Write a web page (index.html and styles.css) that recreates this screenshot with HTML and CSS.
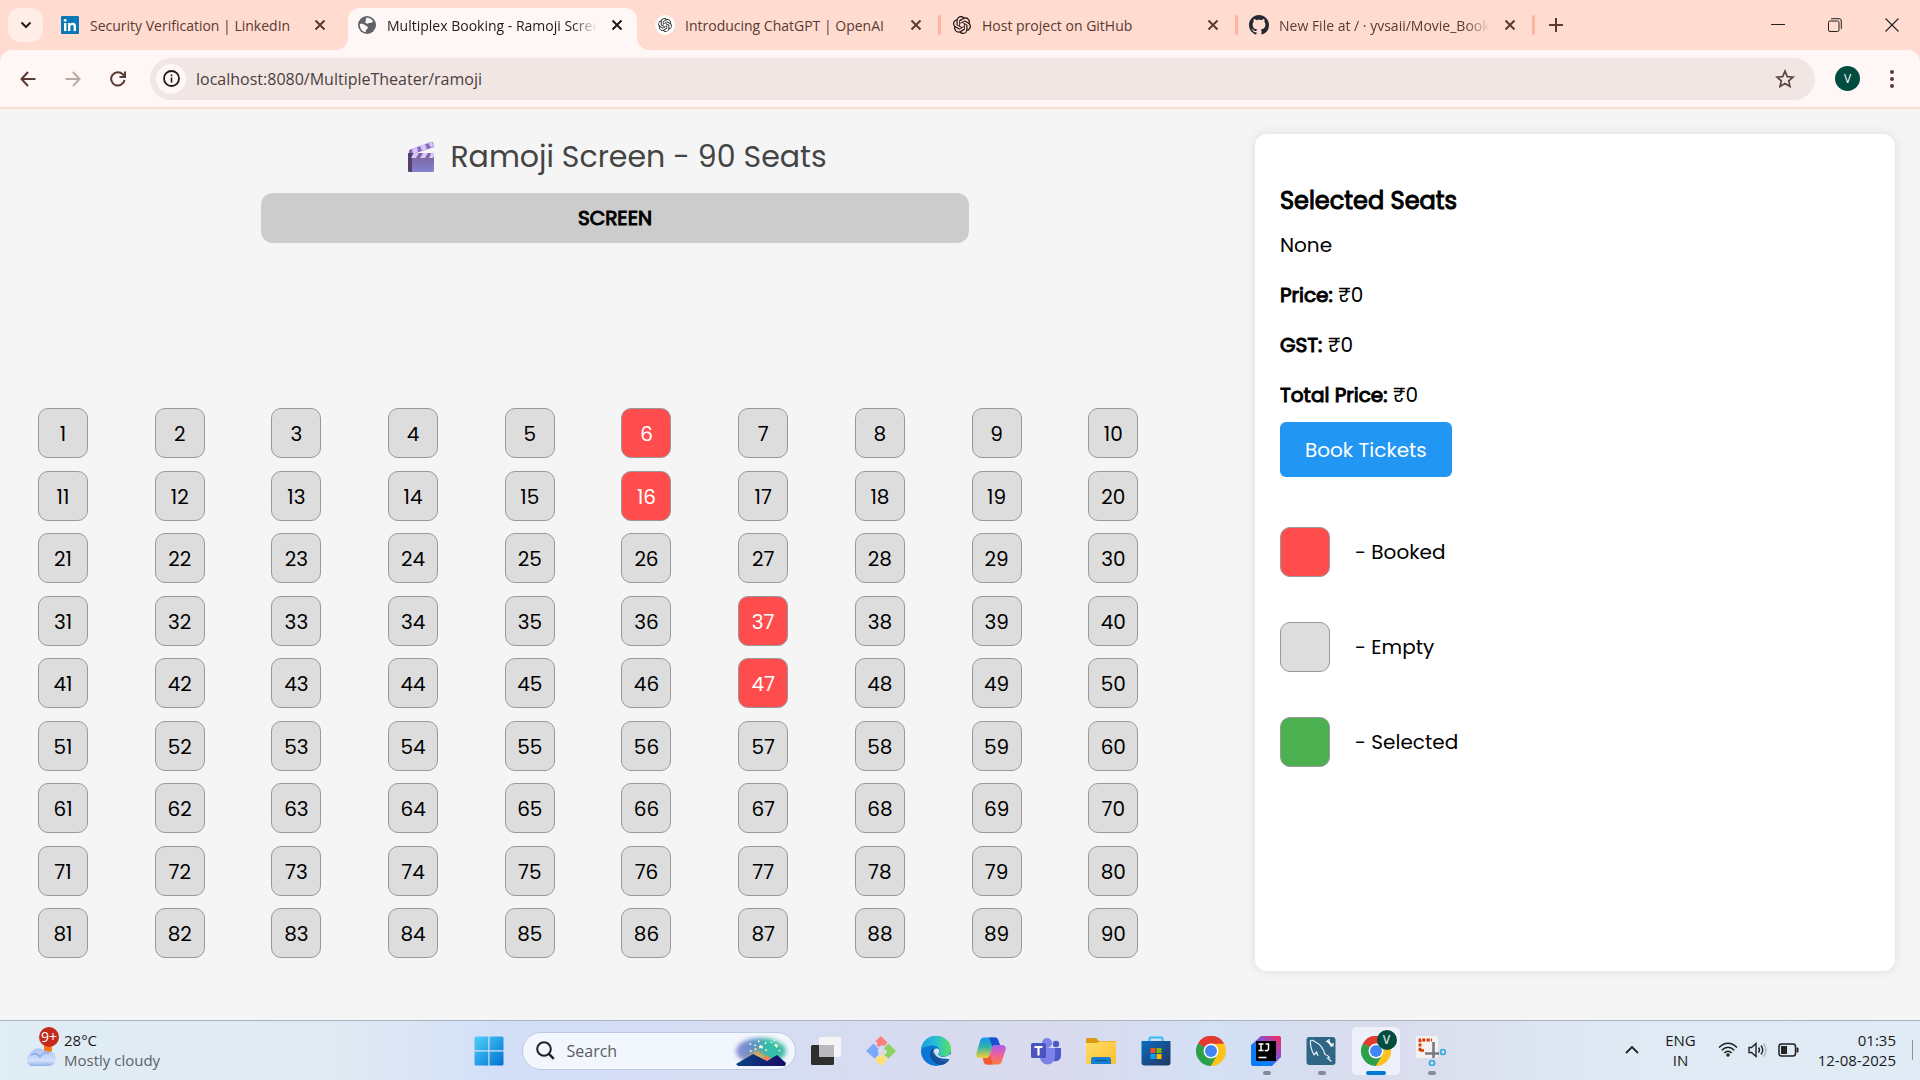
FILE: index.html
```html
<!DOCTYPE html>
<html lang="en">
<head>
<meta charset="utf-8">
<title>Multiplex Booking - Ramoji Screen</title>
<link rel="stylesheet" href="styles.css">
</head>
<body>
<svg class="defs" aria-hidden="true">
  <defs>
    <symbol id="x" viewBox="0 0 12 12"><path d="M1.5 1.5l9 9M10.500 1.500l-9 9" stroke="currentColor" stroke-width="2" fill="none"/></symbol>
    <symbol id="openai" viewBox="0 0 24 24"><path fill="currentColor" d="M22.282 9.821a5.985 5.985 0 0 0-.516-4.910 6.046 6.046 0 0 0-6.510-2.900A6.065 6.065 0 0 0 4.981 4.180a5.985 5.985 0 0 0-3.998 2.900 6.046 6.046 0 0 0 .743 7.097 5.980 5.980 0 0 0 .510 4.911 6.051 6.051 0 0 0 6.515 2.900A5.985 5.985 0 0 0 13.260 24a6.056 6.056 0 0 0 5.772-4.206 5.990 5.990 0 0 0 3.998-2.900 6.056 6.056 0 0 0-.748-7.073zM13.260 22.430a4.476 4.476 0 0 1-2.876-1.040l.142-.081 4.778-2.758a.795.795 0 0 0 .393-.681v-6.737l2.020 1.169a.071.071 0 0 1 .038.052v5.583a4.504 4.504 0 0 1-4.495 4.493zM3.600 18.304a4.470 4.470 0 0 1-.535-3.014l.142.085 4.783 2.759a.771.771 0 0 0 .780 0l5.843-3.369v2.332a.080.080 0 0 1-.033.062L9.740 19.950a4.499 4.499 0 0 1-6.140-1.646zM2.341 7.896a4.485 4.485 0 0 1 2.365-1.973v5.678a.766.766 0 0 0 .388.677l5.815 3.354-2.020 1.169a.076.076 0 0 1-.071 0l-4.830-2.787A4.504 4.504 0 0 1 2.341 7.872zm16.596 3.856l-5.833-3.387L15.120 7.200a.076.076 0 0 1 .071 0l4.830 2.791a4.494 4.494 0 0 1-.676 8.105v-5.678a.790.790 0 0 0-.408-.666zm2.011-3.023l-.142-.085-4.774-2.782a.776.776 0 0 0-.785 0L9.409 9.230V6.897a.066.066 0 0 1 .028-.061l4.830-2.787a4.499 4.499 0 0 1 6.681 4.660zM8.307 12.863l-2.020-1.164a.080.080 0 0 1-.038-.057V6.074a4.499 4.499 0 0 1 7.376-3.453l-.142.080-4.778 2.758a.795.795 0 0 0-.393.682zm1.097-2.365l2.602-1.500 2.607 1.500v2.999l-2.597 1.500-2.607-1.500z"/></symbol>
    <symbol id="chrome" viewBox="0 0 30 30">
      <path d="M2 7.500A15 15 0 0 1 28 7.500L15 15z" fill="#e33b2e"/>
      <path d="M28 7.500A15 15 0 0 1 15 30L15 15z" fill="#fcc31e"/>
      <path d="M15 30A15 15 0 0 1 2 7.500L15 15z" fill="#2da04b"/>
      <path d="M15 7.500H28L21.500 18.700z" fill="#fcc31e"/>
      <path d="M2 7.500L8.500 18.800 15 15z" fill="#2da04b"/>
      <path d="M21.500 18.700L15 30 8.500 18.800z" fill="#2da04b"/><path d="M21.500 18.700L15 30H18L28 15z" fill="#fcc31e"/>
      <path d="M2 7.500Q8 2 15 7.500H28A15 15 0 0 0 2 7.500z" fill="#e33b2e"/>
      <circle cx="15" cy="15" r="7.500" fill="#fff"/><circle cx="15" cy="15" r="6" fill="#4285f4"/>
    </symbol>
    <linearGradient id="winG" x1="0" y1="0" x2="1" y2="1"><stop offset="0" stop-color="#4fd0fb"/><stop offset="1" stop-color="#0071d0"/></linearGradient>
    <linearGradient id="cloudG" x1="0" y1="0" x2="0" y2="1"><stop offset="0" stop-color="#a9c3f2"/><stop offset=".7" stop-color="#d3e1fb"/><stop offset="1" stop-color="#8fb0ea"/></linearGradient>
    <linearGradient id="clapG" x1="0" y1="0" x2="0" y2="1"><stop offset="0" stop-color="#7d5f92"/><stop offset="1" stop-color="#8183d2"/></linearGradient>
    <linearGradient id="edgeG" x1="0" y1="0" x2="1" y2="0"><stop offset="0" stop-color="#1d9be5"/><stop offset=".5" stop-color="#27bfd0"/><stop offset="1" stop-color="#5be35c"/></linearGradient>
    <linearGradient id="copA" x1="0" y1="0" x2="0" y2="1"><stop offset="0" stop-color="#1a8df0"/><stop offset=".45" stop-color="#2fb2b0"/><stop offset="1" stop-color="#f5d12f"/></linearGradient>
    <linearGradient id="copB" x1="0" y1="0" x2="0" y2="1"><stop offset="0" stop-color="#a75cf0"/><stop offset=".5" stop-color="#f0609e"/><stop offset="1" stop-color="#f8813c"/></linearGradient>
    <linearGradient id="ijG" x1="0" y1="1" x2="1" y2="0"><stop offset=".35" stop-color="#087cfa"/><stop offset=".6" stop-color="#8a4fd0"/><stop offset="1" stop-color="#fe2857"/></linearGradient>
    <linearGradient id="storeG" x1="0" y1="0" x2="1" y2="1"><stop offset="0" stop-color="#0a6cc0"/><stop offset="1" stop-color="#23365e"/></linearGradient>
    <linearGradient id="foldG" x1="0" y1="0" x2="1" y2="1"><stop offset="0" stop-color="#ffdd6b"/><stop offset="1" stop-color="#fbbf2a"/></linearGradient>
    <linearGradient id="skyG" x1="0" y1="0" x2="1" y2="0"><stop offset="0" stop-color="#8f8fd8"/><stop offset=".35" stop-color="#5f8fc8"/><stop offset=".65" stop-color="#2dc0a8"/><stop offset="1" stop-color="#46b9a5"/></linearGradient>
    <linearGradient id="hillG" x1="0" y1="0" x2="1" y2="0"><stop offset="0" stop-color="#0b4583"/><stop offset="1" stop-color="#180a68"/></linearGradient>
    <filter id="soft"><feGaussianBlur stdDeviation="2"/></filter>
  </defs>
</svg>

<header class="browser">
  <div class="tabstrip">
    <button class="tab-search" aria-label="Search tabs"><svg width="12" height="12" viewBox="0 0 12 12"><path d="M1.500 3.500L6 8l4.500-4.500" fill="none" stroke="currentColor" stroke-width="2"/></svg></button>
    <div class="tabs">
      <div class="tab">
        <svg class="fav" viewBox="0 0 18 18"><rect width="18" height="18" rx="1" fill="#0a78b5"/><path d="M3 7h2.400v8H3zM7 7h2.300v1.200c.5-.9 1.400-1.400 2.600-1.400 2.400 0 3.100 1.500 3.100 3.800V15h-2.400v-4c0-1.200-.3-2.100-1.400-2.100S9.400 9.700 9.400 11v4H7z" fill="#fff"/><circle cx="4.200" cy="4.300" r="1.400" fill="#fff"/></svg>
        <span class="tab-title">Security Verification | LinkedIn</span>
        <button class="close" aria-label="Close tab"><svg><use href="#x"/></svg></button>
      </div>
      <div class="tab active">
        <svg class="fav" viewBox="0 0 18 18"><circle cx="9" cy="9" r="9" fill="#5f6368"/><path d="M1.800 8c2.200-.6 4 .2 5.200 1.200S10 10 9.800 11.800 7.500 13 7.800 16.200C4 15.800 1.500 12 1.800 8zM8.500 1.800c3-.2 5.500 1.500 6.700 4-1.200 0-1.700 1.400-3.200 1.200s-1.600.8-3 .6S6.500 6.500 7.500 5.500 7 3.200 8.500 1.800z" fill="#fff7f5"/></svg>
        <span class="tab-title fade">Multiplex Booking - Ramoji Screen</span>
        <button class="close" aria-label="Close tab"><svg><use href="#x"/></svg></button>
      </div>
      <div class="tab sep">
        <svg class="fav disc"><use href="#openai"/></svg>
        <span class="tab-title">Introducing ChatGPT | OpenAI</span>
        <button class="close" aria-label="Close tab"><svg><use href="#x"/></svg></button>
      </div>
      <div class="tab sep">
        <svg class="fav chat"><use href="#openai"/></svg>
        <span class="tab-title">Host project on GitHub</span>
        <button class="close" aria-label="Close tab"><svg><use href="#x"/></svg></button>
      </div>
      <div class="tab sep">
        <svg class="fav dark" viewBox="0 0 16 16"><path fill="#24292f" d="M8 0C3.580 0 0 3.580 0 8c0 3.540 2.290 6.530 5.470 7.590.4.070.55-.17.55-.38 0-.19-.010-.82-.010-1.490-2.010.37-2.530-.49-2.690-.94-.090-.23-.48-.94-.82-1.130-.28-.15-.68-.52-.010-.53.63-.010 1.080.58 1.230.82.72 1.210 1.870.87 2.330.66.070-.52.28-.87.510-1.070-1.780-.2-3.640-.89-3.640-3.950 0-.87.310-1.590.82-2.150-.080-.2-.36-1.020.080-2.120 0 0 .67-.21 2.200.82.64-.18 1.320-.27 2-.27s1.360.090 2 .27c1.530-1.040 2.200-.82 2.200-.82.44 1.100.16 1.920.080 2.120.51.56.82 1.270.82 2.150 0 3.070-1.870 3.750-3.650 3.950.29.25.54.73.54 1.480 0 1.070-.010 1.930-.010 2.200 0 .21.15.46.55.38A8.010 8.010 0 0 0 16 8c0-4.420-3.580-8-8-8z"/></svg>
        <span class="tab-title fade">New File at / · yvsaii/Movie_Booking</span>
        <button class="close" aria-label="Close tab"><svg><use href="#x"/></svg></button>
      </div>
    </div>
    <button class="new-tab" aria-label="New tab"><svg width="14" height="14" viewBox="0 0 14 14"><path d="M7 0v14M0 7h14" stroke="currentColor" stroke-width="2"/></svg></button>
    <div class="window-controls">
      <button aria-label="Minimise"><svg width="14" height="14" viewBox="0 0 14 14"><path d="M0 6.500h14" stroke="#222" stroke-width="1"/></svg></button>
      <button aria-label="Restore"><svg width="14" height="14" viewBox="0 0 14 14" fill="none" stroke="#222"><rect x=".5" y="3" width="10.500" height="10.500" rx="1.500"/><path d="M3 .7h8a2.300 2.300 0 0 1 2.300 2.300v8"/></svg></button>
      <button aria-label="Close"><svg width="14" height="14" viewBox="0 0 14 14"><path d="M.5 .5l13 13M13.500 .5l-13 13" stroke="#222" stroke-width="1.100"/></svg></button>
    </div>
  </div>
  <div class="toolbar">
    <nav class="nav">
      <button aria-label="Back"><svg width="16" height="16" viewBox="0 0 16 16"><path d="M15.500 8H1.500M8 1L1.500 8 8 15" fill="none" stroke="currentColor" stroke-width="2"/></svg></button>
      <button aria-label="Forward" class="off"><svg width="16" height="16" viewBox="0 0 16 16"><path d="M.5 8h14M8 1l6.500 7L8 15" fill="none" stroke="currentColor" stroke-width="2"/></svg></button>
      <button aria-label="Reload"><svg width="16" height="16" viewBox="0 0 16 16"><path d="M14.500 9A6.700 6.700 0 1 1 12.800 3.300L15 5.500M15 .5V6H9.500" fill="none" stroke="currentColor" stroke-width="2"/></svg></button>
    </nav>
    <div class="omnibox">
      <button class="info" aria-label="Site information"><svg width="17" height="17" viewBox="0 0 17 17"><circle cx="8.500" cy="8.500" r="7.500" fill="none" stroke="#1f1a18" stroke-width="1.800"/><path d="M8.500 7.500V12.500M8.500 4.500v1.700" stroke="#1f1a18" stroke-width="1.600"/></svg></button>
      <input aria-label="Address" value="localhost:8080/MultipleTheater/ramoji">
      <button class="star" aria-label="Bookmark"><svg width="20" height="20" viewBox="0 0 20 20"><path d="M10 2.200l2.300 5.400 5.700.5-4.300 3.800 1.300 5.700-5-3-5 3 1.300-5.700L2 8.100l5.700-.5z" fill="none" stroke="#5a4540" stroke-width="1.700"/></svg></button>
    </div>
    <button class="avatar" aria-label="Profile">V</button>
    <button class="menu" aria-label="Menu"><svg width="4" height="18" viewBox="0 0 4 18" fill="#5a3a32"><circle cx="2" cy="2" r="2"/><circle cx="2" cy="9" r="2"/><circle cx="2" cy="16" r="2"/></svg></button>
  </div>
</header>

<main class="page">
  <section class="hall">
    <h1><svg width="28" height="30" viewBox="0 0 28 30"><path d="M2 12V8L24 0h2l1 5L3 13z" fill="#8a69b8"/><path d="M5 7l5-2 1 5-5 2zM13 4l5-2 2 5-5 2zM21 1l4-1 2 4-3 1.500z" fill="#d6c6fb"/><rect x="1" y="11" width="26" height="19" rx="1.500" fill="url(#clapG)"/><path d="M1 11h4v19H2.500A1.500 1.500 0 0 1 1 28.500z" fill="#55406d"/><path d="M7 11h5l-3 5H4zM16 11h5l-3 5h-5zM24 11h3v3l-1 2h-4z" fill="#d6c6fb"/></svg>Ramoji Screen - 90 Seats</h1>
    <div class="screen">SCREEN</div>
    <div class="seats" id="seats"></div>
  </section>
  <aside class="summary">
    <h2>Selected Seats</h2>
    <p>None</p>
    <p><strong>Price:</strong> ₹0</p>
    <p><strong>GST:</strong> ₹0</p>
    <p><strong>Total Price:</strong> ₹0</p>
    <button class="book">Book Tickets</button>
    <ul class="legend">
      <li><span class="seat booked"></span>- Booked</li>
      <li><span class="seat"></span>- Empty</li>
      <li><span class="seat selected"></span>- Selected</li>
    </ul>
  </aside>
</main>

<footer class="taskbar">
  <button class="weather">
    <span class="weather-icon"><svg width="32" height="30" viewBox="0 0 32 30"><path d="M20 5h8v9l-4 3h-4z" fill="#f57c14"/><path d="M7 29a7 7 0 0 1-1-12.500A9.500 9.500 0 0 1 21 14l7 1a7.500 7.500 0 0 1-3 14z" fill="url(#cloudG)"/><path d="M7 18q6-3 9 2 3-5 9-4" fill="none" stroke="#8dadea" stroke-width="1.500"/></svg><span class="badge">9+</span></span>
    <span class="weather-text"><span>28°C</span><span class="muted">Mostly cloudy</span></span>
  </button>
  <div class="apps">
    <button class="app" aria-label="Start"><svg width="30" height="30" viewBox="0 0 30 30"><path fill="url(#winG)" d="M2 .5h12.300v13.800H.5V2A1.500 1.500 0 0 1 2 .5zM15.500 .5H28A1.500 1.500 0 0 1 29.500 2v12.300h-14zM.5 15.500h13.800v14H2A1.500 1.500 0 0 1 .5 28zM15.500 15.500h14V28a1.500 1.500 0 0 1-1.500 1.500H15.500z"/></svg></button>
    <label class="search">
      <svg width="19" height="19" viewBox="0 0 19 19"><circle cx="8" cy="8" r="6.800" fill="none" stroke="#222" stroke-width="2"/><path d="M12.800 12.800l5 5" stroke="#222" stroke-width="2.500"/></svg>
      <input placeholder="Search" aria-label="Search">
      <svg width="56" height="32" viewBox="0 0 56 32"><ellipse cx="28" cy="16" rx="25" ry="13" fill="url(#skyG)" filter="url(#soft)"/><path d="M10 26L24 15l14 11z" fill="#e9ad54" filter="url(#soft)"/><path d="M28 12L14 8M28 12l-3-8M28 12l7-6M28 12l-13 5M28 12l8 5M43 11l-5-4M43 11l5-3M43 11l4 5M43 11l-2-7" stroke="#fff6cf" stroke-width="1.500" stroke-dasharray="2 3"/><path d="M3 29l17-10 6 3 8 4 10-6 9 8-1 3H5z" fill="url(#hillG)"/><path d="M30 23l4 3 4-3-4-2z" fill="#ff8054"/></svg>
    </label>
    <button class="app" aria-label="Task view"><svg width="30" height="30" viewBox="0 0 30 30"><rect x="0" y="9" width="23" height="20" rx="1.500" fill="#2e2e2e"/><rect x="8" y="1" width="22" height="20" rx="1.500" fill="#f5f5f7"/><path d="M8 9h15v12H9.500A1.500 1.500 0 0 1 8 19.500z" fill="#b9babd"/></svg></button>
    <button class="app" aria-label="Git"><svg width="30" height="30" viewBox="0 0 30 30"><path d="M15 0l6.500 6.500-3 3.500-3-1-2 2-3-1.500 1-3L9 5.500z" fill="#fb7f7f"/><path d="M7.500 7.500l5 5-1 2.500 2 3-5 4.500L0 15z" fill="#7aa9fb"/><path d="M22.500 7.500L30 15l-7.500 7.500-4.500-4 3-1.500-.5-3-3-1z" fill="#8bd35e"/><path d="M15 15.500l6 8L15 30l-6-6.500z" fill="#ffe073"/><circle cx="14" cy="19" r="2" fill="#d6dff5"/></svg></button>
    <button class="app" aria-label="Edge"><svg width="30" height="30" viewBox="0 0 30 30"><circle cx="15" cy="15" r="15" fill="#0a78d4"/><path d="M0 14C1 5 7 0 15 0c9 0 15 6 15 13 0 5-4 7.500-8 7.500-3 0-5-1-4-3 2-4-1-8-6-8C6 9.500 1 12 0 14z" fill="url(#edgeG)"/><path d="M12 12c-6 5-2 17 9 17 3-.5 6-3 7.500-5.500C21 27 12 22 13 16z" fill="#11509a"/><path d="M12.500 15c.5-3 5-3.500 5.800-.5.500 2-1.800 3-.8 4.500 2 3 8 2.500 12.300-1.200 0 2-.5 4-1.500 5.700C20 27 12 22 12.500 15z" fill="#d6e0f6"/><path d="M13 16c-1 7 8 11 15.500 7.500-3-2-12 2-15.500-7.500z" fill="#11509a"/></svg></button>
    <button class="app" aria-label="Copilot"><svg width="30" height="30" viewBox="0 0 30 30"><path d="M8 1.500h11c2 0 3 1.500 3.500 3.500L24 9h-4c-3 0-3 1-4 4l-2 6c-1 3-2 3-5 3H4c-3 0-4.500-2-3.500-5L4 5c.8-2.500 2-3.500 4-3.500z" fill="url(#copA)"/><path d="M13 1.500h6c2 0 3 1.500 3.500 3.500L24 9h-4c-2 0-3 .5-3.500 2z" fill="#1652cf"/><path d="M22 28.500H11c-2 0-3-1.500-3.500-3.500L7 22h3c3 0 3-1 4-4l2-6c1-3 2-3 5-3h5c3 0 4.500 2 3.500 5L26 25c-.8 2.500-2 3.500-4 3.500z" fill="url(#copB)"/><path d="M17 28.500h-6c-2 0-3-1.500-3.500-3.500L7 22h3c2 0 3-.5 4-3z" fill="#ef5a35"/></svg></button>
    <button class="app" aria-label="Teams"><svg width="30" height="30" viewBox="0 0 30 30"><circle cx="16" cy="7" r="5" fill="#7b83eb"/><circle cx="25" cy="8" r="3.200" fill="#5059c9"/><path d="M20 12h10v8a5.500 5.500 0 0 1-9 4z" fill="#5059c9"/><path d="M9 12h15v9a7.500 7.500 0 0 1-15 0z" fill="#7b83eb"/><rect y="7" width="15" height="15" rx="1.500" fill="#4b53bc"/><path d="M3.500 10h8v2H8.600v7.500H6.400V12H3.500z" fill="#fff"/></svg></button>
    <button class="app" aria-label="File Explorer"><svg width="30" height="30" viewBox="0 0 30 30"><path d="M0 3.500A1.500 1.500 0 0 1 1.500 2H10l3 3h15.500A1.500 1.500 0 0 1 30 6.500V15H0z" fill="#dc9a10"/><path d="M0 7h11l3-1.500h16v21a1.500 1.500 0 0 1-1.500 1.500h-27A1.500 1.500 0 0 1 0 26.500z" fill="url(#foldG)"/><path d="M5 28v-4.500A2.500 2.500 0 0 1 7.500 21h15a2.500 2.500 0 0 1 2.500 2.500V28z" fill="#1580d2"/><path d="M9 24.500h12" stroke="#0b5aa0" stroke-width="1.500"/></svg></button>
    <button class="app" aria-label="Store"><svg width="30" height="30" viewBox="0 0 30 30"><path d="M8.500 6V2.500A1 1 0 0 1 9.500 1.500h11a1 1 0 0 1 1 1V6" fill="none" stroke="#2fbdf3" stroke-width="2"/><path d="M.5 5h29v21.500a3 3 0 0 1-3 3h-23a3 3 0 0 1-3-3z" fill="url(#storeG)"/><path fill="#f25022" d="M9.500 12h5v5h-5z"/><path fill="#7fba00" d="M15.500 12h5v5h-5z"/><path fill="#00a4ef" d="M9.500 18h5v5h-5z"/><path fill="#ffb900" d="M15.500 18h5v5h-5z"/></svg></button>
    <button class="app" aria-label="Chrome"><svg width="30" height="30"><use href="#chrome"/></svg></button>
    <button class="app running" aria-label="IntelliJ IDEA"><svg width="30" height="30" viewBox="0 0 30 30"><path d="M10 0h18a2 2 0 0 1 2 2v19l-9 9H2a2 2 0 0 1-2-2V9z" fill="url(#ijG)"/><rect x="5" y="5" width="20" height="20" fill="#000"/><path d="M7.500 8h5M7.500 14.500h5M10 8v6.500M14.500 8h3v4.500a2 2 0 0 1-3.500 1.500M7.500 21.500h8" stroke="#fff" stroke-width="1.500" fill="none"/></svg></button>
    <button class="app running" aria-label="MySQL Workbench"><svg width="30" height="30" viewBox="0 0 30 30"><rect x=".5" y="1" width="29" height="28" rx="3" fill="#2f6684"/><path d="M8 19C5 14 4 7 4.500 5c.5-1.500 3-.5 5 1 5 2.500 8 7 9.500 12.500 2 .5 3.500 1.500 4.500 3l-2 .5 4 3.500M8 19l2.500-3 1.500 4" fill="none" stroke="#e6eff4" stroke-width="1.200"/><path d="M21 4.500l5 5" stroke="#fff" stroke-width="2"/><path d="M20 5.500h3v-2.500M24 10h3V7" stroke="#fff" stroke-width="1.200" fill="none"/></svg></button>
    <button class="app running current" aria-label="Chrome, profile V"><svg width="30" height="30"><use href="#chrome"/></svg><span class="profile">V</span></button>
    <button class="app running" aria-label="Snipping Tool"><svg width="30" height="30" viewBox="0 0 30 30"><rect width="22" height="22" rx="2.500" fill="#f4f2f0"/><path d="M4 15V4h12" fill="none" stroke="#d83b01" stroke-width="2.800" stroke-dasharray="3.200 1.200"/><path d="M4 14.500h4" stroke="#d83b01" stroke-width="2.500"/><path d="M17.500 6v16M9 17.500h14" stroke="#777b80" stroke-width="2.600"/><circle cx="27" cy="16" r="2.500" fill="none" stroke="#2fa7e0" stroke-width="1.700"/><circle cx="16" cy="27" r="2.500" fill="none" stroke="#2fa7e0" stroke-width="1.700"/></svg></button>
  </div>
  <div class="tray">
    <button aria-label="Hidden icons"><svg width="14" height="9" viewBox="0 0 14 9"><path d="M1 8l6-6 6 6" fill="none" stroke="#222" stroke-width="1.800"/></svg></button>
    <button class="lang">ENG<br>IN</button>
    <button class="status" aria-label="Network, volume, battery">
      <svg width="20" height="15" viewBox="0 0 20 15" fill="none" stroke="#222" stroke-width="1.500"><path d="M1 5.500q9-8.500 18 0M3.700 8.300q6.300-6 12.600 0M6.300 11q3.700-3.600 7.400 0"/><circle cx="10" cy="13" r="1" fill="#222"/></svg>
      <svg width="20" height="16" viewBox="0 0 20 16" fill="none" stroke="#222" stroke-width="1.400"><path d="M1 5.500h2.500L8 1.500v13l-4.500-4H1z"/><path d="M10.500 5.500q2 2.500 0 5M13 3.500q3.500 4.500 0 9"/><path d="M15.500 1.500q5 6.500 0 13" stroke="#aab4bb"/></svg>
      <svg width="21" height="14" viewBox="0 0 21 14"><rect x="1" y="1" width="16.500" height="12" rx="2.500" fill="none" stroke="#222" stroke-width="1.500"/><rect x="3" y="3" width="6" height="8" fill="#222"/><path d="M18.500 4.500h1a1 1 0 0 1 1 1v3a1 1 0 0 1-1 1h-1z" fill="#222"/></svg>
    </button>
    <button class="clock">01:35<br>12-08-2025</button>
    <span class="peek"></span>
  </div>
</footer>
<script src="seats.js"></script>
</body>
</html>
```
FILE: seats.js
```js
const booked = new Set([6, 16, 37, 47]);
const seats = document.getElementById("seats");
for (let n = 1; n <= 90; n++) {
  const seat = document.createElement("button");
  seat.className = booked.has(n) ? "seat booked" : "seat";
  seat.textContent = n;
  seats.append(seat);
}
```
FILE: styles.css
```css
* { box-sizing: border-box; }
html, body { height: 100%; }
body {
  margin: 0;
  display: flex;
  flex-direction: column;
  background: #f5f5f5;
  color: #000;
  font-family: Poppins, Inter, "Noto Sans", sans-serif;
  font-size: 20px;
}
button, input { font: inherit; color: inherit; border: 0; padding: 0; background: none; }
svg { display: block; flex: none; }
.defs { position: absolute; width: 0; height: 0; }

/* Browser */
.browser {
  font-family: "Segoe UI", "Open Sans", sans-serif;
  font-size: 14px;
  color: #5a3a32;
  background: #ffdbd0;
}
.tabstrip { display: flex; height: 50px; padding-left: 8px; }
.tab-search {
  width: 35px; height: 34px; margin-top: 8px;
  border-radius: 12px;
  background: #ffede8;
  color: #1f1a18;
  display: grid; place-items: center;
}
.tabs { display: flex; margin-left: 8px; }
.tab {
  position: relative;
  display: flex; align-items: center;
  width: 297px; height: 42px; margin-top: 8px;
  padding: 0 18px 8px 10px;
}
.tab.active {
  width: 289px;
  margin-right: 8px;
  padding-right: 12px;
  border-radius: 12px 12px 0 0;
  background: #fff7f5;
  color: #1f1a18;
}
.tab.active::before, .tab.active::after {
  content: "";
  position: absolute; bottom: 0;
  width: 12px; height: 12px;
}
.tab.active::before { left: -12px; background: radial-gradient(circle at 0 0, #ffdbd0 12px, #fff7f5 12px); }
.tab.active::after { right: -12px; background: radial-gradient(circle at 100% 0, #ffdbd0 12px, #fff7f5 12px); }
.tab:first-child { padding-right: 20px; }
.tab.sep::after {
  content: "";
  position: absolute; right: 1px; top: 7px;
  width: 3px; height: 20px;
  border-radius: 2px;
  background: #ffb59e;
}
.fav { width: 18px; height: 18px; margin-right: 11px; }
.fav.disc { width: 20px; height: 20px; padding: 3px; margin-right: 10px; border-radius: 50%; background: #fff; color: #222; }
.fav.dark { width: 20px; height: 20px; margin-right: 10px; }
.fav.chat { color: #1a1110; margin: 0 11px 0 1px; }
.tab-title { flex: 1; min-width: 0; overflow: hidden; white-space: nowrap; }
.fade { -webkit-mask-image: linear-gradient(90deg, #000 88%, transparent); mask-image: linear-gradient(90deg, #000 88%, transparent); }
.close { margin-left: 12px; padding: 2px; }
.close svg { width: 12px; height: 12px; }
.new-tab { margin-left: 13px; }
.window-controls { display: flex; margin-left: auto; }
.window-controls button { width: 57px; display: grid; place-items: center; }
.toolbar {
  display: flex; align-items: center;
  height: 59px;
  padding: 0 26px 0 20px;
  border-bottom: 2px solid #f8ddd5;
  border-radius: 12px 12px 0 0;
  background: #fff7f5;
}
.nav { display: flex; gap: 29px; }
.nav .off { color: #b9aaa6; }
.omnibox {
  flex: 1;
  display: flex; align-items: center;
  height: 42px; margin-left: 24px; padding: 0 20px 0 6px;
  border-radius: 21px;
  background: #f2e6e5;
}
.omnibox input { flex: 1; margin-left: 10px; font-size: 16px; color: #4a3f3c; }
.info { width: 30px; height: 30px; border-radius: 50%; background: #fff7f5; display: grid; place-items: center; }
.avatar { width: 25px; height: 25px; margin: 0 30px 0 20px; border-radius: 50%; background: #004d40; color: #fff; font-size: 12px; }

/* Booking page */
.page {
  flex: 1;
  display: grid;
  grid-template-columns: 1180fr 640fr;
  gap: 50px;
  padding: 25px;
}
.hall { display: flex; flex-direction: column; align-items: center; }
h1 {
  display: flex; align-items: center; gap: 15px;
  margin: 0;
  padding-left: 4px;
  font-size: 30px; line-height: 46px; font-weight: 400;
  color: #444;
}
.screen, .summary h2, .summary strong { font-weight: 400; -webkit-text-stroke: 1px currentColor; }
.screen {
  width: 60%;
  margin-top: 13px;
  border-radius: 12px;
  background: #ccc;
  line-height: 50px;
  text-align: center;
}
.seats {
  width: 100%; height: 550px;
  margin-top: auto; margin-bottom: 37px;
  padding: 0 13px;
  display: grid;
  grid-template-columns: repeat(10, 1fr);
  column-gap: 13px;
  align-content: space-between;
}
.seat {
  width: 50px; height: 50px;
  padding-top: 2px;
  border: 1px solid #999;
  border-radius: 10px;
  background: #ddd;
}
.booked { background: #ff4d4d; color: #fff; }
.selected { background: #4caf50; }
.summary {
  margin-bottom: 24px;
  padding: 50px 25px;
  border-radius: 12px;
  background: #fff;
  box-shadow: 0 0 12px rgba(0, 0, 0, .1);
}
.summary h2 { margin: 0 0 12px; font-size: 24px; line-height: 34px; }
.summary p { margin: 0 0 20px; line-height: 30px; }
.book {
  height: 55px; padding: 0 25px;
  border-radius: 6px;
  background: #2196f3;
  color: #fff;
}
.summary p:last-of-type { margin-bottom: 12px; }
.legend { list-style: none; margin: 50px 0 0; padding: 0; display: grid; gap: 45px; }
.legend li { display: flex; align-items: center; gap: 25px; }

/* Taskbar */
.taskbar {
  display: grid; grid-template-columns: 1fr auto 1fr;
  height: 60px;
  border-top: 1px solid #a9b4c0;
  background: linear-gradient(90deg, #e0edf5 0%, #e0eaf4 18%, #d3dff8 26%, #d6ddf2 40%, #d9daed 55%, #d4e0f4 63%, #d9dced 72%, #dfeaf4 84%, #e0ebf5 100%);
  font-family: "Segoe UI", "Open Sans", sans-serif;
  font-size: 15px; line-height: 20px;
  color: #1b1b1b;
}
.weather { display: flex; align-items: center; justify-self: start; padding: 0 0 2px 24px; text-align: left; }
.weather-icon { position: relative; padding-top: 4px; }
.badge {
  position: absolute; top: -6px; left: 15px;
  width: 20px; height: 20px;
  border-radius: 50%;
  background: #c42b1c; color: #fff;
  font-size: 14px; text-align: center;
}
.weather-text { display: grid; margin-left: 8px; }
.muted { color: #5c6166; }
.apps { display: flex; align-items: center; }
.app { position: relative; width: 55px; height: 48px; display: grid; place-items: center; }
.search {
  display: flex; align-items: center;
  width: 274px; height: 38px;
  margin: 0 3px 0 5px; padding: 0 6px 0 13px;
  border: 1px solid #bccbe2; border-radius: 19px;
  background: #f2f6fd;
}
.search input { flex: 1; min-width: 0; margin-left: 12px; font-size: 16px; }
.search input::placeholder { color: #5a5d63; opacity: 1; }
.running::after {
  content: "";
  position: absolute; bottom: 0; left: 24px;
  width: 8px; height: 4px;
  border-radius: 2px;
  background: #858a93;
}
.current { width: 48px; margin: 0 4px 0 3px; border-radius: 5px; background: #edf0f9; }
.current::after { left: 14px; width: 20px; background: #0078d4; }
.profile {
  position: absolute; top: 3px; right: 3px;
  width: 20px; height: 20px;
  border-radius: 50%;
  background: #004d40; color: #cfe0dc;
  font-size: 12px; font-weight: 600;
}
.tray { display: flex; align-items: center; justify-self: end; padding: 0 7px 2px 0; }
.lang { margin: 0 22px 0 26px; }
.status { display: flex; align-items: center; gap: 10px; }
.clock { margin: 0 16px 0 19px; text-align: right; }
.peek { width: 1px; height: 20px; background: #8d949b; }
```
